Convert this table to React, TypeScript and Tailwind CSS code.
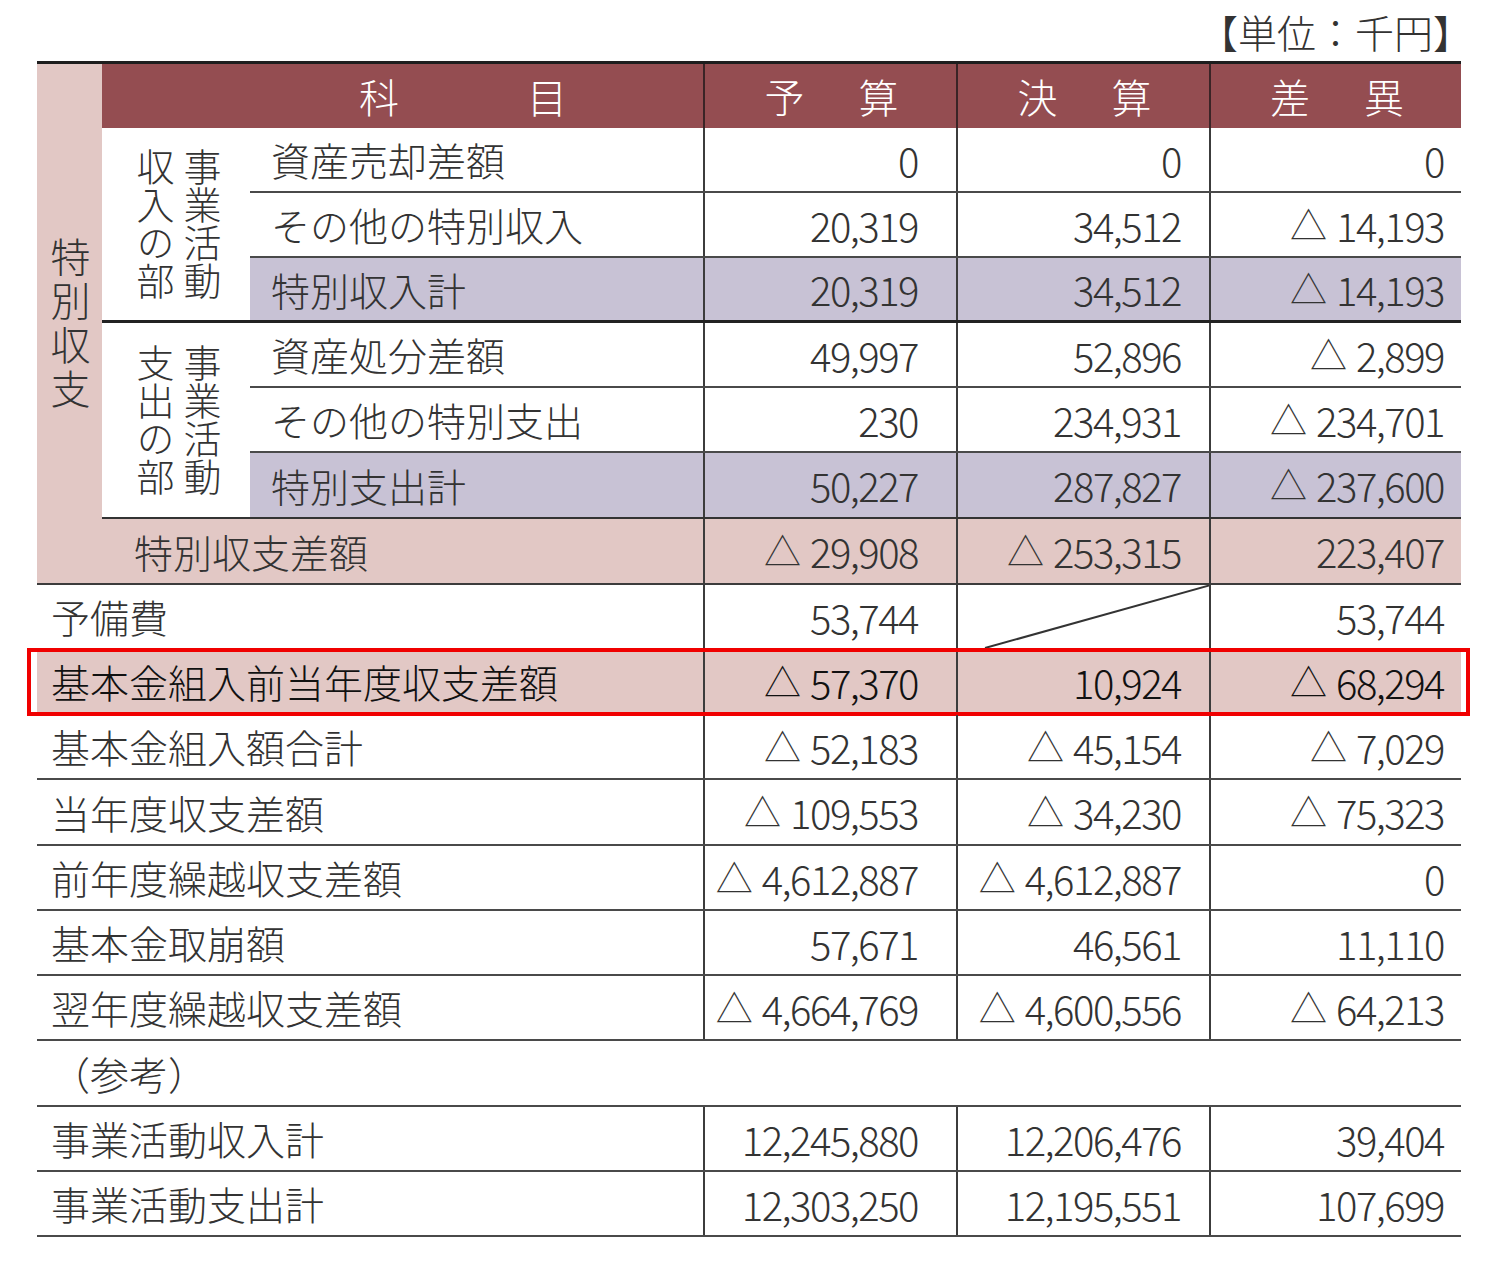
import type { ReactNode } from 'react'

type Triple = [string, string, string]

const HEAD_BG = 'bg-[#944d51]'
const PINK = 'bg-[#e2c8c5]'
const LAVENDER = 'bg-[#c8c2d5]'

function Num({ s }: { s: string }) {
  if (s.startsWith('△')) {
    return (
      <>
        <span className="text-[37px] tracking-normal">△</span>
        <span className="ml-[9px]">{s.slice(1)}</span>
      </>
    )
  }
  return <>{s}</>
}

function Values({ v, bg = '', slash = false }: { v: Triple; bg?: string; slash?: boolean }) {
  return (
    <>
      <div className={`flex w-[253px] shrink-0 items-center justify-end border-l-2 border-[#3c3c3c] pr-[38px] tracking-[-1.5px] ${bg}`}>
        <Num s={v[0]} />
      </div>
      <div className={`relative flex w-[253px] shrink-0 items-center justify-end border-l-2 border-[#3c3c3c] pr-[28px] tracking-[-1.5px] ${bg}`}>
        {slash ? (
          <svg className="absolute inset-0 h-full w-full" viewBox="0 0 251 63" preserveAspectRatio="none">
            <line x1="27" y1="63" x2="253" y2="0" stroke="#333" strokeWidth="2" />
          </svg>
        ) : (
          <Num s={v[1]} />
        )}
      </div>
      <div className={`flex w-[252px] shrink-0 items-center justify-end border-l-2 border-[#3c3c3c] pr-[17px] tracking-[-1.5px] ${bg}`}>
        <Num s={v[2]} />
      </div>
    </>
  )
}

function ItemRow({ label, v, total = false, last = false }: { label: string; v: Triple; total?: boolean; last?: boolean }) {
  const bg = total ? LAVENDER : ''
  return (
    <div className={`flex ${last ? 'h-[62px]' : 'h-[65px] border-b-2 border-[#4a4a4a]'}`}>
      <div className={`flex w-[453px] shrink-0 items-center pl-[21px] text-[39px] ${bg}`}>{label}</div>
      <Values v={v} bg={bg} />
    </div>
  )
}

function Group({ title, rows, height }: { title: ReactNode; rows: { label: string; v: Triple }[]; height: string }) {
  return (
    <div className={`flex border-b-[3px] border-[#222] ${height}`}>
      <div className="flex w-[148px] shrink-0 items-center justify-center pl-[6px]">
        <div className="text-[38px] leading-[47px] [writing-mode:vertical-rl]">{title}</div>
      </div>
      <div className="flex flex-1 flex-col">
        {rows.map((row, i) => (
          <ItemRow key={row.label} label={row.label} v={row.v} total={i === rows.length - 1} last={i === rows.length - 1} />
        ))}
      </div>
    </div>
  )
}

function PlainRow({ label, v, h = 'h-[65px]', slash = false }: { label: string; v: Triple; h?: string; slash?: boolean }) {
  return (
    <div className={`flex border-b-2 border-[#4a4a4a] ${h}`}>
      <div className="flex w-[666px] shrink-0 items-center pl-[14px] text-[39px]">{label}</div>
      <Values v={v} slash={slash} />
    </div>
  )
}

const income = [
  { label: '資産売却差額', v: ['0', '0', '0'] as Triple },
  { label: 'その他の特別収入', v: ['20,319', '34,512', '△14,193'] as Triple },
  { label: '特別収入計', v: ['20,319', '34,512', '△14,193'] as Triple },
]

const expense = [
  { label: '資産処分差額', v: ['49,997', '52,896', '△2,899'] as Triple },
  { label: 'その他の特別支出', v: ['230', '234,931', '△234,701'] as Triple },
  { label: '特別支出計', v: ['50,227', '287,827', '△237,600'] as Triple },
]

const lower = [
  { label: '基本金組入額合計', v: ['△52,183', '△45,154', '△7,029'] as Triple, h: 'h-[65px]' },
  { label: '当年度収支差額', v: ['△109,553', '△34,230', '△75,323'] as Triple, h: 'h-[66px]' },
  { label: '前年度繰越収支差額', v: ['△4,612,887', '△4,612,887', '0'] as Triple, h: 'h-[65px]' },
  { label: '基本金取崩額', v: ['57,671', '46,561', '11,110'] as Triple, h: 'h-[65px]' },
  { label: '翌年度繰越収支差額', v: ['△4,664,769', '△4,600,556', '△64,213'] as Triple, h: 'h-[65px]' },
]

const reference = [
  { label: '事業活動収入計', v: ['12,245,880', '12,206,476', '39,404'] as Triple },
  { label: '事業活動支出計', v: ['12,303,250', '12,195,551', '107,699'] as Triple },
]

export default function App() {
  return (
    <div className="min-h-[1281px] w-[1500px] bg-white font-['Noto_Sans_CJK_JP',sans-serif] text-[40px] font-light text-[#333]">
      <div className="ml-[37px] h-[61px] w-[1435px] pt-[11px] text-right text-[39px] leading-[40px]">【単位：千円】</div>

      <div className="ml-[37px] w-[1424px] border-t-[3px] border-[#1e1e1e]">
        <div className="flex border-b-2 border-[#3c3c3c]">
          <div className={`flex w-[65px] shrink-0 items-center justify-center ${PINK}`}>
            <div className="pl-[2px] pt-[3px] text-[40px] leading-[40px] tracking-[4px] [writing-mode:vertical-rl]">特別収支</div>
          </div>

          <div className="flex w-[1359px] flex-col">
            <div className={`flex h-[64px] text-white ${HEAD_BG}`}>
              <div className="flex w-[601px] shrink-0 items-center pl-[257px]">
                <span>科</span>
                <span className="ml-[128px]">目</span>
              </div>
              {['予算', '決算', '差異'].map((t, i) => (
                <div
                  key={t}
                  className={`flex shrink-0 items-center justify-center gap-[54px] border-l-2 border-[#3a2426] pl-[2px] ${i === 2 ? 'w-[252px]' : 'w-[253px]'}`}
                >
                  <span>{t[0]}</span>
                  <span>{t[1]}</span>
                </div>
              ))}
            </div>

            <Group
              title={
                <>
                  事業活動
                  <br />
                  収入の部
                </>
              }
              rows={income}
              height="h-[195px]"
            />

            <div className="flex h-[196px] border-b-2 border-[#333]">
              <div className="flex w-[148px] shrink-0 items-center justify-center pl-[6px]">
                <div className="text-[38px] leading-[47px] [writing-mode:vertical-rl]">
                  事業活動
                  <br />
                  支出の部
                </div>
              </div>
              <div className="flex flex-1 flex-col">
                {expense.map((row, i) => (
                  <div key={row.label} className={`flex ${i === 2 ? 'h-[64px]' : 'h-[65px] border-b-2 border-[#4a4a4a]'}`}>
                    <div className={`flex w-[453px] shrink-0 items-center pl-[21px] text-[39px] ${i === 2 ? LAVENDER : ''}`}>{row.label}</div>
                    <Values v={row.v} bg={i === 2 ? LAVENDER : ''} />
                  </div>
                ))}
              </div>
            </div>

            <div className="flex h-[64px]">
              <div className={`flex w-[601px] shrink-0 items-center pl-[32px] text-[39px] ${PINK}`}>特別収支差額</div>
              <Values v={['△29,908', '△253,315', '223,407']} bg={PINK} />
            </div>
          </div>
        </div>

        <PlainRow label="予備費" v={['53,744', '', '53,744']} slash />

        <div className="relative">
          <div className={`flex h-[65px] border-b-2 border-[#4a4a4a] text-[#111] ${PINK}`}>
            <div className="flex w-[666px] shrink-0 items-center pl-[14px] text-[39px]">基本金組入前当年度収支差額</div>
            <Values v={['△57,370', '10,924', '△68,294']} />
          </div>
          <div className="pointer-events-none absolute -top-[2px] -right-[9px] -bottom-[1px] -left-[10px] border-[4px] border-[#f00000]" />
        </div>

        {lower.map((row) => (
          <PlainRow key={row.label} label={row.label} v={row.v} h={row.h} />
        ))}

        <div className="flex h-[66px] items-center border-b-2 border-[#4a4a4a] pl-[14px] text-[39px]">（参考）</div>

        {reference.map((row) => (
          <PlainRow key={row.label} label={row.label} v={row.v} />
        ))}
      </div>
    </div>
  )
}
